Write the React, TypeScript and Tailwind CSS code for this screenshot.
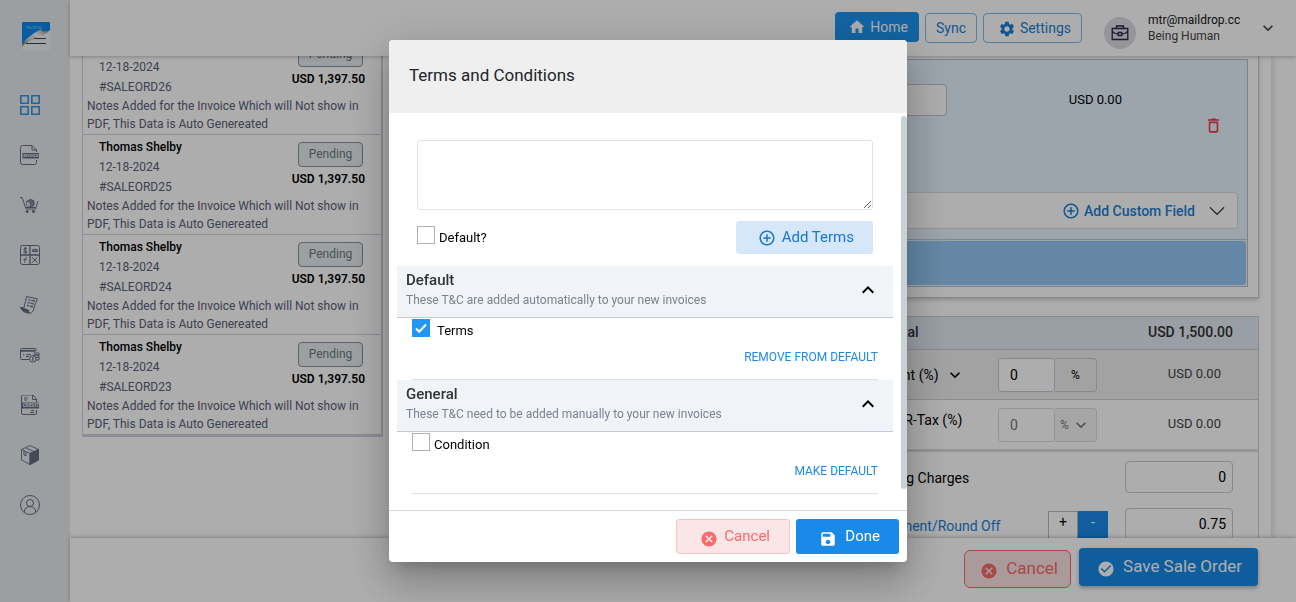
import type { ReactNode } from "react";
import {
  MdAddCircleOutline,
  MdCancel,
  MdCheckCircle,
  MdDeleteOutline,
  MdExpandLess,
  MdExpandMore,
  MdHome,
  MdSave,
  MdSettings,
} from "react-icons/md";
import { BsChevronDown } from "react-icons/bs";

const Svg = ({ children }: { children: ReactNode }) => (
  <svg viewBox="0 0 20 20" className="size-5" fill="none" stroke="currentColor" strokeWidth="1" aria-hidden="true">
    {children}
  </svg>
);

const Logo = () => (
  <svg viewBox="0 0 28 28" className="size-7" aria-hidden="true">
    <defs>
      <linearGradient id="curl" x1="0" y1="1" x2="1" y2="0">
        <stop offset="0" stopColor="#4b4f53" />
        <stop offset="0.3" stopColor="#c4c6c8" />
        <stop offset="0.6" stopColor="#f4f4f4" />
        <stop offset="1" stopColor="#6a6e72" />
      </linearGradient>
    </defs>
    <rect width="28" height="28" rx="1" fill="#f1f2f3" />
    <path d="M0 1a1 1 0 0 1 1-1h26a1 1 0 0 1 1 1v7l-4 2L0 22z" fill="#0a86ee" />
    <path d="M0 25C0 19 8 13 20 6.500c-1 2-.5 3 2 2.700 3 0 5-.7 6-1.200-3 4-8 5-13 8C9 19 3 20 0 25z" fill="url(#curl)" />
    <path d="M4 21.500h20M12 16.500h12" stroke="#3f4347" strokeWidth="1.200" />
    <text x="4" y="7" fontSize="4" fontFamily="Roboto, sans-serif" fill="#8fd0ff">INVOICE</text>
  </svg>
);

const navItems: { label: string; active?: boolean; icon: ReactNode }[] = [
  {
    label: "Dashboard",
    active: true,
    icon: (
      <Svg>
        <path strokeWidth="1.6" d="M.8.8h7.4v7.4H.8zM11.8.8h7.4v7.4h-7.4zM.8 11.8h7.4v7.4H.8zM11.8 11.8h7.4v7.4h-7.4z" />
      </Svg>
    ),
  },
  {
    label: "Invoices",
    icon: (
      <Svg>
        <path d="M16.5 7V5L12 .5H2.5Q.5.5.5 2.5v15q0 2 2 2h12q2 0 2-2V15M12 .5V5h4.5" />
        <rect x="2.5" y="8" width="16.5" height="5.5" fill="currentColor" stroke="none" />
        <text x="3.2" y="12.3" fontSize="4" fontFamily="Roboto, sans-serif" fontWeight="700" fill="#e6ebef" stroke="none">INVOICE</text>
      </Svg>
    ),
  },
  {
    label: "Purchases",
    icon: (
      <Svg>
        <path d="M0 2.5h2L6.2 14h9.3L18 6M5.500 12.500h10" />
        <path d="m6.5 6.5 4-2.2L14 6v4.3l-4 2.2-3.5-2.2z" strokeWidth=".7" />
        <path d="m10 8 4-2v4.300l-4 2.200zM6.500 6.500l4-2.200L14 6l-4 2z" fill="currentColor" strokeWidth=".4" fillOpacity=".75" />
        <circle cx="7.2" cy="16.5" r="1.1" fill="currentColor" />
        <circle cx="13.5" cy="16.5" r="1.1" fill="currentColor" />
      </Svg>
    ),
  },
  {
    label: "Accounts",
    icon: (
      <Svg>
        <rect x=".5" y=".5" width="19" height="19" rx="2" />
        <path d="M10 .5v19M.5 10h19" strokeWidth="1.3" />
        <path d="M7 3.700C6 2.700 3.600 3 3.800 4.500S7 5.500 7 7 4.300 8 3.400 7M5.300 2v6.700" />
        <path d="M12.500 6.500c0-3 5-3 5 0zM12 5h6M6.800 12.300c-2-.2-1.300 2-2.300 5.400M3.500 14.500h3M12 12.500l5.500 5M17.500 12.500l-5.500 5" />
      </Svg>
    ),
  },
  {
    label: "Estimates",
    icon: (
      <Svg>
        <path d="M6.500 1.500 17.500 4q-2.500 4-3.500 9c-.7 3.500-2 5-4 5.200C6 18 2 16 .7 12.300l3 .8Q6 6 6.500 1.500z" />
        <path d="M8.500 4.700l6.500 1.500M7.700 7.500l6 1.500M7 10.300l6 1.500" strokeWidth="1.300" strokeDasharray="2 1 5 1" />
        <path d="m.7 12.300 8 3q-.3 2.500.8 2.700C5 18 1.500 16 .7 12.300z" fill="currentColor" />
      </Svg>
    ),
  },
  {
    label: "Payments",
    icon: (
      <Svg>
        <path d="M9.500 14.500H1.500q-1 0-1-1V4.500q0-1 1-1h13.500q1 0 1 1V6" />
        <path d="M.5 5.800h15" strokeWidth="1.800" />
        <path d="M3.700 9v1.500M6 9.700h5M6 11.500h3M13.500 8h5.500v2h-5M13 10.200h6v2.200h-3M16 12.500h3v2.500h-3" />
        <circle cx="12.800" cy="14" r="3.200" />
        <path d="M13.600 12.800c-1.300-.6-1.700.7-.8 1.200s.5 1.700-.9 1.100M12.800 12v4" strokeWidth=".8" />
      </Svg>
    ),
  },
  {
    label: "Credit notes",
    icon: (
      <Svg>
        <path d="M16.500 7V4L13 0H3Q1.500 0 1.500 1.500V18q0 1.500 1.500 1.500h12q1.500 0 1.500-1.500v-3M12.500 0v4.500h4M4 3h4M4 5h3M11 15.500h3M10 17.500h4" />
        <rect x="2" y="7.500" width="17" height="6" fill="currentColor" stroke="none" />
        <text x="2.700" y="12.300" fontSize="4.800" fontFamily="Roboto, sans-serif" fontWeight="700" fill="#e6ebef" stroke="none">CREDIT</text>
      </Svg>
    ),
  },
  {
    label: "Products",
    icon: (
      <Svg>
        <path d="m10 .5 8.500 4v10.500l-8.500 4.500-8.500-4.500V4.500zM1.500 4.500l8.500 4 8.500-4M10 8.500v11M5.500 2.700l8.500 4" strokeWidth=".9" />
        <path d="m10 8.500 8.500-4V15L10 19.500z" fill="currentColor" />
        <path d="M4 6v4l2 .8V7" />
      </Svg>
    ),
  },
  {
    label: "Profile",
    icon: (
      <Svg>
        <circle cx="10" cy="10" r="9.500" />
        <circle cx="10" cy="8" r="3.500" />
        <path d="M4.200 17.200c0-7.500 11.600-7.500 11.600 0" />
      </Svg>
    ),
  },
];

const orders = ["#SALEORD26", "#SALEORD25", "#SALEORD24", "#SALEORD23"];

function OrderItem({ id }: { id: string }) {
  return (
    <li className="flex h-[100px] flex-col border-b border-[#ced2e0] pt-0.5 pl-1 text-xs text-[#5a6078]">
      <div className="flex justify-between pr-4 pl-3">
        <div className="leading-5">
          <div className="font-medium text-black">Thomas Shelby</div>
          <div>12-18-2024</div>
          <div>{id}</div>
        </div>
        <div className="flex flex-col items-end pt-[5px]">
          <span className="mr-0.5 flex h-[25px] w-[65px] items-center justify-center rounded border border-[#8890a2] bg-[#e6ecee] pb-0.5 text-[#6c757d]">
            Pending
          </span>
          <span className="leading-6 font-semibold text-black">USD 1,397.50</span>
        </div>
      </div>
      <p className="leading-[18px]">
        Notes Added for the Invoice Which will Not show in PDF, This Data is Auto Genereated
      </p>
    </li>
  );
}

function Check({ id, label, checked = false }: { id: string; label: string; checked?: boolean }) {
  return (
    <div className="flex items-start">
      <span className="grid size-[18px] shrink-0">
        <input
          id={id}
          type="checkbox"
          defaultChecked={checked}
          className="peer col-start-1 row-start-1 size-[18px] appearance-none border border-[#b0b0b0] bg-white checked:border-[#2196f3] checked:bg-[#2196f3]"
        />
        <svg viewBox="0 0 18 18" className="pointer-events-none col-start-1 row-start-1 hidden size-[18px] peer-checked:block" fill="none" stroke="#fff" strokeWidth="2" aria-hidden="true">
          <path d="m4 9.500 3.200 3.200L14 5.500" />
        </svg>
      </span>
      <label htmlFor={id} className={checked ? "pt-0.5 pl-[7px] text-[13px] leading-5" : "pt-0.5 pl-1 text-[13px] leading-5"}>
        {label}
      </label>
    </div>
  );
}

function TermsSection({ title, hint, action, children }: { title: string; hint: string; action: string; children: ReactNode }) {
  return (
    <section>
      <button type="button" aria-expanded="true" className="flex h-[52px] w-full items-center justify-between border-b border-[#c3cbd3] bg-[#f0f4f8] pr-[13px] pb-[3px] pl-[9px] text-left">
        <span>
          <span className="block text-[15px] leading-5 font-medium text-[#333]">{title}</span>
          <span className="block text-xs leading-5 text-[#7b8191]">{hint}</span>
        </span>
        <MdExpandLess className="size-6 text-black" />
      </button>
      <div className="mx-[15px] border-b border-[#dee2e6] pt-px pb-3">
        {children}
        <div className="flex justify-end pt-1">
          <button type="button" className="text-xs leading-5 text-[#1e88e5]">{action}</button>
        </div>
      </div>
    </section>
  );
}

function TermsDialog() {
  return (
    <div className="fixed inset-0 z-20 flex items-center justify-center bg-black/32">
      <div role="dialog" aria-modal="true" aria-labelledby="terms-title" className="w-[518px] overflow-hidden rounded bg-white shadow-[0_11px_15px_-7px_rgba(0,0,0,0.2),0_24px_38px_3px_rgba(0,0,0,0.14),0_9px_46px_8px_rgba(0,0,0,0.12)]">
        <header className="flex h-[73px] items-center bg-[#efefef] px-5 pb-0.5">
          <h2 id="terms-title" className="text-[17px] text-[#212529]">Terms and Conditions</h2>
        </header>
        <div className="flex">
          <div className="h-[397px] grow overflow-hidden px-2 pt-[27px]">
            <div className="px-5">
              <textarea aria-label="New term" className="block h-[70px] w-full rounded-[3px] border border-[#dee2e6] p-2 text-sm outline-none" />
              <div className="flex items-start justify-between pt-[11px] pb-3">
                <div className="pt-[5px]">
                  <Check id="make-default" label="Default?" />
                </div>
                <button type="button" className="flex h-[33px] w-[137px] items-center justify-end gap-1.5 rounded-[3px] bg-[#d6e7fa] pr-[19px] text-[15px] text-[#1976d2]">
                  <MdAddCircleOutline className="size-[18px]" />
                  Add Terms
                </button>
              </div>
            </div>
            <TermsSection title="Default" hint="These T&C are added automatically to your new invoices" action="REMOVE FROM DEFAULT">
              <div className="h-6">
                <Check id="term-1" label="Terms" checked />
              </div>
            </TermsSection>
            <TermsSection title="General" hint="These T&C need to be added manually to your new invoices" action="MAKE DEFAULT">
              <div className="h-6">
                <Check id="term-2" label="Condition" />
              </div>
            </TermsSection>
          </div>
          <div className="w-1.5 pt-[3px]">
            <div className="h-[373px] rounded-full bg-[#c8d1d3]" />
          </div>
        </div>
        <footer className="flex h-[52px] justify-end gap-1.5 border-t border-[#d6d6d6] px-2 pt-2">
          <button type="button" className="flex h-[35px] w-[114px] items-center justify-end gap-1.5 rounded-[3px] border border-[#f8c4c8] bg-[#fae6e7] pr-[19px] text-[15px] text-[#f96a6a]">
            <MdCancel className="mt-1 size-[18px]" />
            Cancel
          </button>
          <button type="button" className="flex h-[35px] w-[103px] items-center justify-end gap-2 rounded-[3px] bg-[#1a8ae8] pr-[19px] text-[15px] text-white">
            <MdSave className="mt-1 size-[18px]" />
            Done
          </button>
        </footer>
      </div>
    </div>
  );
}

function Header() {
  return (
    <header className="z-10 flex h-14 shrink-0 items-start justify-end bg-white pr-[18px] shadow-[0_1px_4px_rgba(0,0,0,0.25)]">
      <div className="flex gap-1.5 pt-3">
        <button type="button" className="flex h-[30px] w-[84px] items-center justify-end gap-1 rounded bg-[#1a94f0] pr-[11px] text-sm text-white">
          <MdHome className="size-[18px]" />
          Home
        </button>
        <button type="button" className="mt-px h-[30px] w-[52px] rounded border border-[#7dbdf2] text-sm text-[#1a7fd4]">Sync</button>
        <button type="button" className="mt-px flex h-[30px] w-[99px] items-center justify-end gap-1 rounded border border-[#7dbdf2] pr-2.5 text-sm text-[#1a7fd4]">
          <MdSettings className="mt-px size-[18px]" />
          Settings
        </button>
      </div>
      <div className="ml-[22px] flex pt-3">
        <span className="mt-[5px] flex size-8 items-center justify-center rounded-full bg-[#dcdce4] text-[#26264c]">
          <svg viewBox="0 0 18 16" className="h-4 w-[18px]" fill="none" stroke="currentColor" strokeWidth="1.300" aria-hidden="true">
            <path d="M1.200 3.500h15.600v11H1.200zM5.500 3.500V1h7v2.500M1.200 6q2 3 6 3M16.800 6q-2 3-6 3M7.200 7.500h3.600v3H7.200z" />
          </svg>
        </span>
        <div className="w-[119px] pl-3 text-xs leading-4 text-[#444]">
          <div className="text-[#151515]">mtr@maildrop.cc</div>
          <div>Being Human</div>
        </div>
        <button type="button" aria-label="Account menu" className="ml-[3px] flex h-8 w-5 items-center text-[#444]">
          <MdExpandMore className="size-5" />
        </button>
      </div>
    </header>
  );
}

function OrderForm() {
  return (
    <div className="flex w-[870px] flex-col pr-3 pl-3 text-sm text-black">
      <div className="border-x border-b border-[#cacaca] pr-2.5 pb-2.5 pl-2.5 pt-[3px] shadow-[0_2px_4px_rgba(0,0,0,0.2)]">
        <div className="border border-[#bcc2ca] bg-[#e7f3fe]">
          <div className="flex h-[132px] items-start justify-end pt-6">
            <input aria-label="Item tax" className="h-8 w-[150px] rounded border border-[#c3c6ca] bg-white" />
            <div className="w-[175px] pt-1.5 text-right text-[13px] leading-5">USD 0.00</div>
            <button type="button" aria-label="Delete item" className="mt-8 mr-6 ml-[82px] text-[#f03a47]">
              <MdDeleteOutline className="size-[19px]" />
            </button>
          </div>
          <div className="mr-[9px] ml-2 flex h-[37px] items-center justify-end rounded border border-[#dcdcdc] bg-white pr-[11px] font-medium text-[#1a7fd4]">
            <MdAddCircleOutline className="mr-1 size-[18px]" />
            <button type="button">Add Custom Field</button>
            <BsChevronDown className="ml-[13px] size-[18px] text-[#222]" />
          </div>
          <div className="mt-2.5 border-t border-[#c0c6ce] p-px">
            <div className="h-11 rounded-[3px] bg-[#93c8f3]" />
          </div>
        </div>
      </div>
      <div className="mt-[18px] ml-auto w-[420px] border border-[#c8cedb] [&>div]:pl-5">
        <div className="flex h-[33px] items-center justify-between border-b border-[#cdcdcd] bg-[#e2eaf4] pr-[25px] pb-0.5 font-medium text-[#333]">
          <span>Sub Total</span>
          <span>USD 1,500.00</span>
        </div>
        <div className="flex h-[49px] items-center bg-[#efefef] pr-[37px]">
          <label htmlFor="discount">Discount (%)</label>
          <MdExpandMore className="ml-1.5 size-5" />
          <div className="ml-auto flex w-[99px]">
            <input id="discount" defaultValue="0" className="h-[34px] w-[57px] rounded border border-[#c6cad6] bg-white px-[11px]" />
            <span className="flex h-[34px] grow items-center justify-center rounded-r border border-l-0 border-[#c6cad6] text-xs">%</span>
          </div>
          <span className="w-[124px] text-right text-[13px] text-[#444]">USD 0.00</span>
        </div>
        <div className="flex h-[50px] items-center border-t border-[#cfcfcf] pr-[37px]">
          <label htmlFor="labour-tax" className="pb-2.5">LABOUR-Tax (%)</label>
          <div className="ml-auto flex w-[99px] text-[#777]">
            <input id="labour-tax" disabled defaultValue="0" className="h-[34px] w-[57px] rounded border border-[#d8dae0] bg-white px-[11px]" />
            <span className="flex h-[34px] grow items-center justify-center rounded-r border border-l-0 border-[#d8dae0] bg-[#f5f5f5] text-xs">
              %<MdExpandMore className="ml-0.5 size-5" />
            </span>
          </div>
          <span className="w-[124px] text-right text-[13px] text-[#444]">USD 0.00</span>
        </div>
        <div className="flex h-[52px] items-center justify-between border-t-3 border-[#dcdcdc] pr-[25px]">
          <label htmlFor="shipping" className="pt-0.5">Shipping Charges</label>
          <input id="shipping" defaultValue="0" className="h-8 w-[108px] rounded border border-[#c6cad6] px-1.5 text-right" />
        </div>
        <div className="flex h-12 items-start pr-[25px] pt-[7px]">
          <label htmlFor="round-off" className="pt-2 text-[#1a7fd4]">Adjustment/Round Off</label>
          <div className="mt-[3px] ml-auto flex text-sm">
            <button type="button" className="h-[30px] w-[30px] border border-[#bbb] pb-2">+</button>
            <button type="button" className="h-[30px] w-[30px] bg-[#1a8ae8] pb-2 text-white">-</button>
          </div>
          <input id="round-off" defaultValue="0.75" className="ml-[17px] h-8 w-[108px] rounded border border-[#c6cad6] px-1.5 text-right" />
        </div>
      </div>
    </div>
  );
}

export default function App() {
  return (
    <div className="flex h-screen overflow-hidden bg-white font-[Roboto,'Open_Sans',sans-serif]">
      <nav className="flex w-[70px] shrink-0 flex-col items-center bg-[#e6ebef] pt-[22px]">
        <div className="pl-[1px]">
          <Logo />
        </div>
        <ul className="flex flex-col gap-[30px] pt-[45px] pr-2.5">
          {navItems.map((item) => (
            <li key={item.label}>
              <a href="#" aria-label={item.label} className={item.active ? "block text-[#3395e0]" : "block text-[#656d80]"}>
                {item.icon}
              </a>
            </li>
          ))}
        </ul>
      </nav>
      <div className="flex min-w-0 grow flex-col">
        <Header />
        <main className="flex min-h-0 grow justify-between overflow-hidden pr-[25px] pl-3">
          <ul className="-mt-[21px] h-fit w-[301px] shrink-0 border-r-2 border-b-2 border-l border-[#ced2e0]">
            {orders.map((id) => (
              <OrderItem key={id} id={id} />
            ))}
          </ul>
          <div className="shrink-0 shadow-[2px_0_6px_rgba(0,0,0,0.15)]">
            <OrderForm />
          </div>
        </main>
        <footer className="z-10 flex h-16 shrink-0 items-start justify-end gap-2 bg-white pt-2.5 pr-[38px] shadow-[0_-1px_4px_rgba(0,0,0,0.25)]">
          <button type="button" className="mt-0.5 flex h-[38px] w-[107px] items-center justify-end gap-2 rounded-md border border-[#f96a6a] bg-[#fbe4e4] pr-3 text-[17px] text-[#f96a6a]">
            <MdCancel className="mt-1 size-[18px]" />
            Cancel
          </button>
          <button type="button" className="flex h-[38px] w-[179px] items-center justify-end gap-2 rounded bg-[#178ae6] pr-4 text-[17px] text-white shadow-[0_2px_4px_rgba(0,0,0,0.3)]">
            <MdCheckCircle className="mt-1 size-[18px]" />
            Save Sale Order
          </button>
        </footer>
      </div>
      <TermsDialog />
    </div>
  );
}
